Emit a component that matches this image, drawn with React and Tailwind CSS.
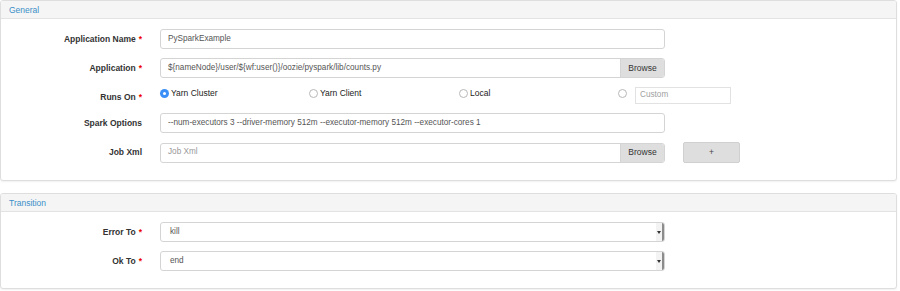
import React from 'react';

const Label = ({ text, required, className = '' }) => (
    <div className={`w-[142px] shrink-0 pr-[1px] text-right font-bold text-[#333] ${className}`}>
        {text}
        {required && <span className="ml-[3px] text-[#e00]">*</span>}
    </div>
);

const TextInput = ({ value, placeholder, browse }) => (
    <div className="ml-[17px] flex h-[20px] w-[505px] overflow-hidden rounded-[3px] border border-[#d4d4d4] bg-white text-[8.2px]">
        <div className={`flex flex-1 items-center px-[7px] ${value ? 'text-[#555]' : 'text-[#999]'}`}>
            {value || placeholder}
        </div>
        {browse && (
            <div className="flex w-[44px] items-center justify-center border-l border-[#d4d4d4] bg-[#dedede] text-[8.5px] text-[#333]">
                Browse
            </div>
        )}
    </div>
);

const Select = ({ value }) => (
    <div className="ml-[17px] flex h-[20px] w-[505px] overflow-hidden rounded-[3px] border border-[#d4d4d4] bg-white text-[8.2px]">
        <div className="flex flex-1 items-center px-[9px] text-[#555]">{value}</div>
        <div className="flex w-[8px] items-center justify-center border-r-2 border-[#8c8c8c] bg-[#f3f3f3]">
            <div className="h-0 w-0 border-x-[2px] border-t-[3px] border-x-transparent border-t-[#333]" />
        </div>
    </div>
);

const Radio = ({ checked }) =>
    checked ? (
        <span className="flex h-[9px] w-[9px] shrink-0 items-center justify-center rounded-full bg-[#3b8ff7]">
            <span className="h-[3px] w-[3px] rounded-full bg-white" />
        </span>
    ) : (
        <span className="block h-[9px] w-[9px] shrink-0 rounded-full border border-[#b8b8b8] bg-white" />
    );

const Panel = ({ title, children }) => (
    <div className="overflow-hidden rounded-[3px] border border-[#dedede] bg-white shadow-[0_1px_2px_rgba(0,0,0,0.06)]">
        <div className="flex h-[18px] items-center border-b border-[#e3e3e3] bg-[#f5f5f5] px-[8px] pt-[1px] text-[#3a8fc8]">
            {title}
        </div>
        <div className="flex flex-col gap-[9px] pt-[10px] pb-[17px]">{children}</div>
    </div>
);

const Row = ({ children }) => <div className="flex items-center">{children}</div>;

const App = () => {
    return (
        <div
            className="h-[291px] w-[900px] bg-white pr-[3px] text-[8.5px] leading-none"
            style={{ fontFamily: '"Liberation Sans", Arial, sans-serif' }}
        >
            <Panel title="General">
                <Row>
                    <Label text="Application Name" required />
                    <TextInput value="PySparkExample" />
                </Row>
                <Row>
                    <Label text="Application" required />
                    <TextInput value="${nameNode}/user/${wf:user()}/oozie/pyspark/lib/counts.py" browse />
                </Row>
                <div className="flex h-[17px] items-start">
                    <Label text="Runs On" required className="pt-[6px]" />
                    <div className="ml-[17px] flex items-start">
                        <div className="flex w-[149px] items-center gap-[2px] pt-[2px] text-[#222]">
                            <Radio checked /> Yarn Cluster
                        </div>
                        <div className="flex w-[150px] items-center gap-[2px] pt-[2px] text-[#222]">
                            <Radio /> Yarn Client
                        </div>
                        <div className="flex w-[159px] items-center gap-[2px] pt-[2px] text-[#222]">
                            <Radio /> Local
                        </div>
                        <div className="flex items-start">
                            <div className="flex pt-[2px]">
                                <Radio />
                            </div>
                            <div className="ml-[8px] flex h-[17px] w-[96px] items-center border border-[#e2e2e2] px-[4px] text-[8.2px] text-[#a0a0a0]">
                                Custom
                            </div>
                        </div>
                    </div>
                </div>
                <Row>
                    <Label text="Spark Options" />
                    <TextInput value="--num-executors 3 --driver-memory 512m --executor-memory 512m --executor-cores 1" />
                </Row>
                <Row>
                    <Label text="Job Xml" />
                    <TextInput placeholder="Job Xml" browse />
                    <button className="ml-[18px] flex h-[21px] w-[57px] items-center justify-center rounded-[2px] border border-[#d0d0d0] bg-[#dedede] text-[#444]">
                        +
                    </button>
                </Row>
            </Panel>

            <div className="h-[12px]" />

            <Panel title="Transition">
                <Row>
                    <Label text="Error To" required />
                    <Select value="kill" />
                </Row>
                <Row>
                    <Label text="Ok To" required />
                    <Select value="end" />
                </Row>
            </Panel>
        </div>
    );
};

export default App;
